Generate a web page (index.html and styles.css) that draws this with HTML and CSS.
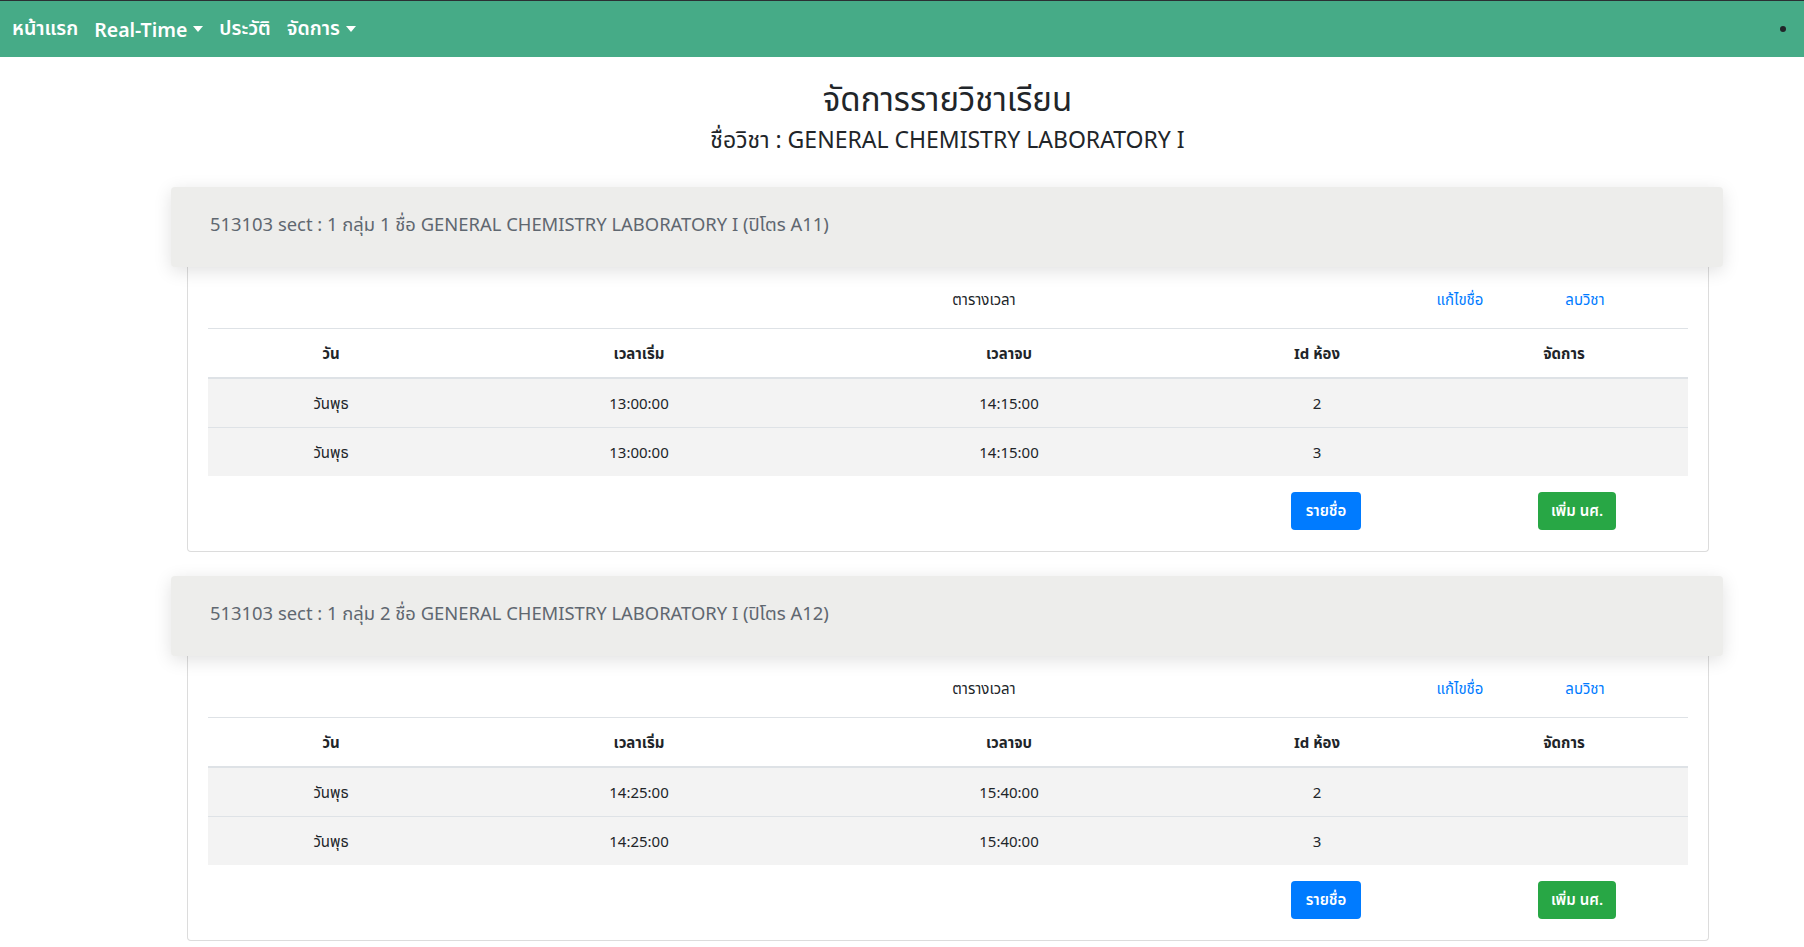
FILE: index.html
```html
<!DOCTYPE html>
<html lang="th">
<head>
<meta charset="utf-8">
<title>จัดการรายวิชาเรียน</title>
<link rel="stylesheet" href="styles.css">
</head>
<body>
<nav class="navbar">
  <div class="nav-left">
    <a class="nav-link" href="#">หน้าแรก</a>
    <a class="nav-link dropdown" href="#">Real-Time</a>
    <a class="nav-link" href="#">ประวัติ</a>
    <a class="nav-link dropdown" href="#">จัดการ</a>
  </div>
  <span class="nav-dot"></span>
</nav>

<main class="page">
  <h2 class="title">จัดการรายวิชาเรียน</h2>
  <h4 class="subtitle">ชื่อวิชา : GENERAL CHEMISTRY LABORATORY I</h4>

  <section class="card">
    <div class="card-header">513103 sect : 1 กลุ่ม 1 ชื่อ GENERAL CHEMISTRY LABORATORY I (ปิโตร A11)</div>
    <div class="card-body">
      <div class="toprow">
        <span></span>
        <span class="cap">ตารางเวลา</span>
        <a href="#" class="link">แก้ไขชื่อ</a>
        <a href="#" class="link">ลบวิชา</a>
      </div>
      <table class="tbl">
        <thead>
          <tr><th>วัน</th><th>เวลาเริ่ม</th><th>เวลาจบ</th><th>Id ห้อง</th><th>จัดการ</th></tr>
        </thead>
        <tbody>
          <tr><td>วันพุธ</td><td>13:00:00</td><td>14:15:00</td><td>2</td><td></td></tr>
          <tr><td>วันพุธ</td><td>13:00:00</td><td>14:15:00</td><td>3</td><td></td></tr>
        </tbody>
      </table>
      <div class="btnrow">
        <span></span>
        <a href="#" class="btn btn-blue">รายชื่อ</a>
        <span></span>
        <a href="#" class="btn btn-green">เพิ่ม นศ.</a>
      </div>
    </div>
  </section>

  <section class="card">
    <div class="card-header">513103 sect : 1 กลุ่ม 2 ชื่อ GENERAL CHEMISTRY LABORATORY I (ปิโตร A12)</div>
    <div class="card-body">
      <div class="toprow">
        <span></span>
        <span class="cap">ตารางเวลา</span>
        <a href="#" class="link">แก้ไขชื่อ</a>
        <a href="#" class="link">ลบวิชา</a>
      </div>
      <table class="tbl">
        <thead>
          <tr><th>วัน</th><th>เวลาเริ่ม</th><th>เวลาจบ</th><th>Id ห้อง</th><th>จัดการ</th></tr>
        </thead>
        <tbody>
          <tr><td>วันพุธ</td><td>14:25:00</td><td>15:40:00</td><td>2</td><td></td></tr>
          <tr><td>วันพุธ</td><td>14:25:00</td><td>15:40:00</td><td>3</td><td></td></tr>
        </tbody>
      </table>
      <div class="btnrow">
        <span></span>
        <a href="#" class="btn btn-blue">รายชื่อ</a>
        <span></span>
        <a href="#" class="btn btn-green">เพิ่ม นศ.</a>
      </div>
    </div>
  </section>
</main>
</body>
</html>
```

FILE: styles.css
```css
* { box-sizing: border-box; }
html, body { margin: 0; padding: 0; background: #fff; }
body {
  font-family: "Noto Sans", "Noto Sans Thai", "Loma", "Garuda", sans-serif;
  color: #212529;
  font-size: 15px;
}
a { text-decoration: none; }

.navbar {
  height: 57px;
  background: #46ab87;
  border-top: 1px solid #2b2f33;
  display: flex;
  align-items: center;
  justify-content: space-between;
  padding: 0 18px 0 12px;
}
.nav-left { display: flex; align-items: center; gap: 16px; }
.nav-link {
  color: #fff;
  font-size: 19.5px;
  font-weight: 600;
  display: flex;
  align-items: center;
}
.dropdown::after {
  content: "";
  display: inline-block;
  margin-left: 6px;
  border-top: 6px solid #fff;
  border-left: 5.5px solid transparent;
  border-right: 5.5px solid transparent;
}
.nav-dot {
  width: 6px; height: 6px;
  border-radius: 50%;
  background: #212529;
}

.page { padding-left: 91px; padding-bottom: 10px; }
.title {
  text-align: center;
  font-size: 33px;
  font-weight: 400;
  margin: 22px 0 0;
  line-height: 40px;
}
.subtitle {
  text-align: center;
  font-size: 23px;
  font-weight: 400;
  margin: 0;
  line-height: 40px;
}

.card { margin: 28px 81px 24px 80px; }
.card + .card { margin-top: 0; }
.card-header {
  position: relative;
  z-index: 1;
  height: 80px;
  display: flex;
  align-items: center;
  padding: 0 39px 4px;
  background: #ededeb;
  border-radius: 4px;
  box-shadow: 0 4px 18px rgba(0,0,0,0.12);
  color: #5f6770;
  font-size: 18.4px;
}
.card-body {
  margin: 0 14px 0 16px;
  border: 1px solid #dcdcdc;
  border-top: none;
  border-radius: 0 0 4px 4px;
  padding: 0 20px 21px;
}
.toprow {
  display: grid;
  grid-template-columns: 362px 828px 124px 126px 1fr;
  align-items: center;
  height: 62px;
  padding-top: 6px;
  text-align: center;
  border-bottom: 1px solid #dee2e6;
}
.link { color: #007bff; }

.tbl {
  width: 100%;
  border-collapse: collapse;
  table-layout: fixed;
}
.tbl th, .tbl td {
  text-align: center;
  padding: 12px;
  line-height: 24px;
}
.tbl th { font-weight: 700; border-bottom: 2px solid #dee2e6; }
.tbl th:nth-child(1) { width: 246px; }
.tbl th:nth-child(2) { width: 370px; }
.tbl th:nth-child(3) { width: 370px; }
.tbl th:nth-child(4) { width: 246px; }
.tbl tbody tr { background: #f3f3f3; }
.tbl tbody tr + tr td { border-top: 1px solid #dee2e6; }

.btnrow {
  display: grid;
  grid-template-columns: 1083px 70px 177px 78px 1fr;
  margin-top: 16px;
}
.btn {
  display: flex;
  align-items: center;
  justify-content: center;
  height: 38px;
  border-radius: 4px;
  color: #fff;
  font-weight: 600;
  font-size: 15px;
}
.btn-blue { background: #007bff; }
.btn-green { background: #28a745; }
```
